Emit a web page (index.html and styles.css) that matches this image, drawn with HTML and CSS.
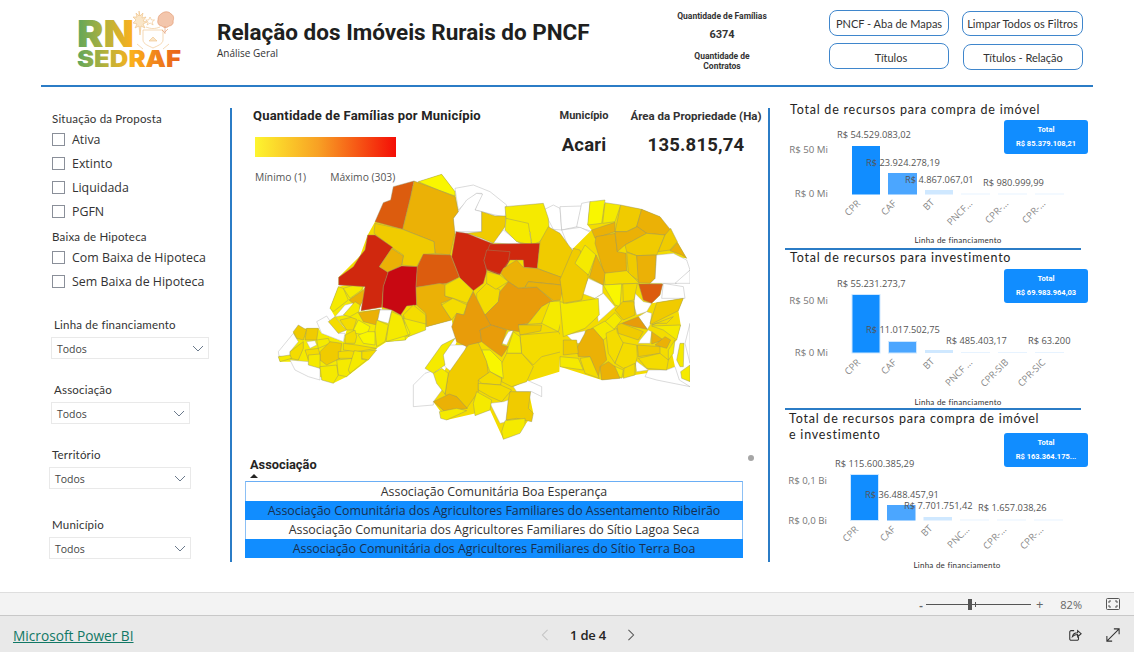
FILE: index.html
```html
<!DOCTYPE html>
<html lang="pt-BR">
<head>
<meta charset="utf-8">
<title>Relação dos Imóveis Rurais do PNCF</title>
<link rel="stylesheet" href="styles.css">
</head>
<body>
<div class="report">
  <header class="head">
    <svg class="logo" viewBox="0 0 110 60" aria-label="RN SEDRAF">
      <defs>
        <linearGradient id="lg1" gradientUnits="userSpaceOnUse" x1="0" y1="0" x2="106" y2="0">
          <stop offset="0" stop-color="#5ea65c"/><stop offset=".28" stop-color="#b9b23a"/><stop offset=".52" stop-color="#fbb01c"/><stop offset=".8" stop-color="#ee7a1c"/><stop offset="1" stop-color="#e8601a"/>
        </linearGradient>
      </defs>
      <text class="logo-rn" x="0" y="36" textLength="57" lengthAdjust="spacingAndGlyphs" fill="url(#lg1)">RN</text>
      <text class="logo-sedraf" x="0" y="56" textLength="104" lengthAdjust="spacingAndGlyphs" fill="url(#lg1)">SEDRAF</text>
      <g class="logo-art-a">
        <path d="M62 0l1 5 3-3-1 5 4-1-3 4 4 1-4 2 2 4-4-2-1 9-1-9-4 2 2-4-4-1 3-3-3-3 4 0-1-4 3 3z"/>
        <path d="M73 6l1.500 3h3l-2.400 2 1 3-3-2-3 2 1-3-2.400-2h3z" class="line"/>
        <path d="M66 19h20v10c0 4-6 6-10 8-4-2-10-4-10-8z" class="line"/>
        <path d="M69 16c5 2 9 2 14 0" class="line"/>
        <path d="M72 30l4-4 4 4z"/>
        <path d="M60 33l6 5M92 33l-6 5" class="line"/>
      </g>
      <g class="logo-art-b">
        <path d="M84 3c3-3 8-3 10 0 3 1 3 5 2 7 1 3-2 5-4 5-2 2-5 2-7 0-3 0-5-3-4-6 0-3 1-5 3-6z"/>
        <path d="M88 15v8M85 19l3 3M91 18l-3 3" class="line"/>
      </g>
    </svg>
    <div class="titles">
      <h1 class="title">Relação dos Imóveis Rurais do PNCF</h1>
      <p class="subtitle">Análise Geral</p>
    </div>
    <div class="kpis">
      <div class="kpi-label kpi-first">Quantidade de Famílias</div>
      <div class="kpi-value">6374</div>
      <div class="kpi-label kpi-last">Quantidade de<br>Contratos</div>
    </div>
    <nav class="buttons">
      <a class="btn btn-a">PNCF - Aba de Mapas</a>
      <a class="btn btn-b">Limpar Todos os Filtros</a>
      <a class="btn btn-c">Títulos</a>
      <a class="btn btn-d">Títulos - Relação</a>
    </nav>
  </header>

  <main class="body">
    <aside class="filters">
      <h4 class="f-label">Situação da Proposta</h4>
      <ul class="checks">
        <li class="check"><span class="box"></span>Ativa</li>
        <li class="check"><span class="box"></span>Extinto</li>
        <li class="check"><span class="box"></span>Liquidada</li>
        <li class="check"><span class="box"></span>PGFN</li>
      </ul>
      <h4 class="f-label f-baixa">Baixa de Hipoteca</h4>
      <ul class="checks checks-tight">
        <li class="check"><span class="box"></span>Com Baixa de Hipoteca</li>
        <li class="check"><span class="box"></span>Sem Baixa de Hipoteca</li>
      </ul>
      <div class="slicer s-linha">
        <h4 class="f-label">Linha de financiamento</h4>
        <div class="select"><span>Todos</span><svg class="chev" viewBox="0 0 12 7"><path d="M1 1l5 5 5-5"/></svg></div>
      </div>
      <div class="slicer s-assoc">
        <h4 class="f-label">Associação</h4>
        <div class="select"><span>Todos</span><svg class="chev" viewBox="0 0 12 7"><path d="M1 1l5 5 5-5"/></svg></div>
      </div>
      <div class="slicer s-terr">
        <h4 class="f-label">Território</h4>
        <div class="select"><span>Todos</span><svg class="chev" viewBox="0 0 12 7"><path d="M1 1l5 5 5-5"/></svg></div>
      </div>
      <div class="slicer s-mun">
        <h4 class="f-label">Município</h4>
        <div class="select"><span>Todos</span><svg class="chev" viewBox="0 0 12 7"><path d="M1 1l5 5 5-5"/></svg></div>
      </div>
    </aside>

    <section class="center">
      <div class="center-top">
        <div class="legend">
          <h2 class="legend-title">Quantidade de Famílias por Município</h2>
          <div class="ramp"></div>
          <div class="legend-scale"><span>Mínimo (1)</span><span>Máximo (303)</span></div>
        </div>
        <div class="card card-mun">
          <div class="card-label">Município</div>
          <div class="card-value">Acari</div>
        </div>
        <div class="card card-area">
          <div class="card-label">Área da Propriedade (Ha)</div>
          <div class="card-value">135.815,74</div>
        </div>
      </div>

      <svg class="map" viewBox="0 0 1290 840">
        <polygon class="u c3" points="345,155 475,35 545,13 585,65 595,125 580,190 700,220 840,215 865,170 935,240 985,320 1000,385 1015,460 950,485 900,560 898,605 800,635 820,730 795,765 730,808 690,720 560,750 520,695 555,600 590,515 575,450 500,470 445,500 380,515 365,412 303,422 315,350 236,345 236,322 300,258 323,195"/>
        <g class="w">
          <polygon points="585,55 640,45 690,65 740,105 735,140 705,135 645,120 665,70 650,70 620,95 595,120"/>
          <polygon points="580,145 620,90 650,70 668,72 645,120 665,125 665,185 580,185"/>
          <polygon points="850,120 880,105 900,115 905,180 880,178 855,130"/>
          <polygon points="900,110 965,108 952,170 905,180"/>
          <polygon points="965,100 990,95 985,165 998,185 950,170"/>
          <polygon points="905,180 960,172 998,190 980,225 945,240 925,230"/>
          <polygon points="695,218 730,180 785,225"/>
          <polygon points="360,418 392,420 385,465 355,450"/>
          <polygon points="725,520 745,485 760,480 740,525"/>
          <polygon points="460,645 495,610 525,600 550,655 520,695 520,705 460,710"/>
          <polygon points="545,560 565,525 620,525 605,575 580,610 555,590"/>
          <polygon points="690,700 730,695 745,690 740,755 720,760"/>
          <polygon points="760,650 800,630 845,650 845,680 815,665 770,665"/>
          <polygon points="925,510 950,485 978,480 975,520 950,520"/>
        </g>
        <g transform="translate(45 330)">
          <polygon class="u c2" points="190,20 270,5 250,95 315,88 345,130 425,105 430,140 392,180 335,185 305,205 280,240 215,290 175,310 135,290 135,220 100,245 15,245 10,230 45,215 55,155 95,145 130,145 140,160 205,185 215,150 180,110 165,85"/>
          <g class="w">
            <polygon points="180,110 210,75 250,65 240,90 215,105"/>
            <polygon points="125,125 155,108 190,160 210,160 205,185 140,160"/>
            <polygon points="10,215 55,160 70,185 45,215 45,235 12,228"/>
            <polygon points="95,185 120,182 125,195 105,205"/>
            <polygon points="45,240 100,245 135,265 135,300 100,290 60,270"/>
            <polygon points="305,120 310,90 350,90 340,130"/>
          </g>
          <polygon class="c2" points="190,20 205,25 220,60 175,95 165,85"/>
          <polygon class="c2" points="205,25 270,5 260,30 225,55"/>
          <polygon class="c5" points="222,60 265,30 272,20 270,50 250,90 240,75"/>
          <polygon class="c2" points="205,105 240,65 255,75 252,95 225,110"/>
          <polygon class="c5" points="250,98 315,88 305,135 265,125"/>
          <polygon class="c3" points="160,125 180,110 205,140 215,150 190,160"/>
          <polygon class="c3" points="195,120 228,112 245,118 235,150 215,150"/>
          <polygon class="c1" points="235,150 250,120 285,140 275,165 240,160"/>
          <polygon class="c3" points="240,150 210,165 210,190 240,190 245,170"/>
          <polygon class="c1" points="250,165 278,155 300,155 300,195 265,190"/>
          <polygon class="c2" points="300,150 305,120 340,135 330,185 305,200"/>
          <polygon class="c1" points="345,130 380,105 385,145 392,180 335,185"/>
          <polygon class="c1" points="385,110 425,105 430,140 395,170"/>
          <polygon class="c4" points="55,155 70,135 95,150 85,180 65,175"/>
          <polygon class="c4" points="95,145 130,145 125,180 90,180"/>
          <polygon class="c3" points="45,215 85,185 85,205 70,240 45,235"/>
          <polygon class="c3" points="90,210 130,205 135,225 100,240"/>
          <polygon class="c2" points="10,230 45,225 50,235 15,245"/>
          <polygon class="c2" points="125,180 160,175 165,190 130,205"/>
          <polygon class="c4" points="135,215 165,185 200,190 195,235 155,255 135,240"/>
          <polygon class="c2" points="100,225 135,222 135,265 100,255"/>
          <polygon class="c2" points="135,260 185,255 190,285 175,310 140,300"/>
          <polygon class="c2" points="185,240 235,235 250,255 215,290 190,285"/>
          <polygon class="c3" points="190,215 240,210 235,235 190,235"/>
          <polygon class="c3" points="260,215 305,210 280,240 260,235"/>
          <polygon class="c3" points="205,190 245,195 305,205 245,215 205,210"/>
          <polygon class="c2" points="238,212 260,215 260,238 275,240 225,280 220,270"/>
        </g>

        <polygon class="c1" points="475,35 545,13 585,65 585,78 535,60"/>
        <polygon class="c7" points="400,50 462,33 452,80 428,178 345,155 370,98 392,90"/>
        <polygon class="c5" points="462,33 535,60 585,80 595,125 580,145 585,190 570,255 525,250 522,215 428,178 452,80"/>
        <polygon class="c4" points="665,125 705,138 738,138 735,170 700,220 665,205 620,190 665,185"/>
        <polygon class="c2" points="735,110 850,100 865,145 868,180 840,215 815,225 810,185 738,145"/>
        <polygon class="c2" points="738,145 805,160 815,225 770,215 735,180"/>
        <polygon class="c4" points="345,160 428,178 522,215 525,250 490,255 470,290 425,285 430,255 395,232 342,190"/>
        <polygon class="c8" points="323,195 345,195 398,232 358,290 385,305 370,350 365,412 303,422 315,350 236,345 236,322 280,290 300,258 315,240"/>
        <polygon class="c5" points="395,235 430,258 425,285 385,308 358,290"/>
        <polygon class="c9" points="385,305 425,288 472,290 468,350 470,405 440,408 422,435 395,420 367,412 370,350"/>
        <polygon class="c7" points="490,252 572,255 598,322 560,340 468,352 472,290"/>
        <polygon class="c8" points="588,185 620,190 700,222 675,262 680,305 670,340 640,362 600,325 575,260"/>
        <polygon class="c8" points="690,222 840,220 832,295 792,292 790,270 750,270 735,295 718,315 680,300 672,270"/>
        <polygon class="c8" points="680,240 750,245 745,275 720,312 680,298 672,272"/>
        <polygon class="c4" points="865,170 900,190 940,245 910,325 832,295 840,215"/>
        <polygon class="c5" points="468,352 540,340 558,345 555,378 580,385 543,400 575,450 500,470 497,430 470,405"/>
        <polygon class="c3" points="555,345 598,322 640,362 622,400 580,385 555,378"/>
        <polygon class="c3" points="545,405 578,385 622,405 610,435 590,430 575,450"/>
        <polygon class="c3" points="650,370 680,340 720,360 715,395 675,435 650,405"/>
        <polygon class="c3" points="680,305 720,315 745,335 708,358 680,340"/>
        <polygon class="c5" points="722,310 730,295 770,270 790,292 832,296 905,322 905,345 805,335 795,352 775,355 745,335"/>
        <polygon class="c5" points="805,335 905,345 905,390 880,392 830,352 795,352"/>
        <polygon class="c6" points="720,365 745,335 775,355 830,352 880,395 845,410 805,460 780,485 745,480 690,465 675,435 715,395"/>
        <polygon class="c6" points="640,365 675,435 692,465 660,480 665,515 620,530 590,515 575,470 590,430 612,435 622,400"/>
        <polygon class="c6" points="660,480 695,465 740,480 725,525 745,530 725,560 690,535 665,515"/>
        <polygon class="c3" points="805,460 845,410 870,395 860,440 845,460 775,465"/>
        <polygon class="c2" points="845,460 870,395 920,392 895,485"/>
        <polygon class="c4" points="775,465 845,465 842,483 780,495"/>
        <polygon class="c3" points="780,495 842,490 895,485 912,510 905,545 845,560 820,585 785,550"/>
        <polygon class="c2" points="745,530 760,485 780,500 785,550 740,550"/>
        <polygon class="c3" points="725,580 740,550 785,550 820,590 800,635 755,650 725,635"/>
        <polygon class="c1" points="665,540 690,540 725,575 730,625 690,605"/>
        <polygon class="c4" points="625,525 655,518 680,575 685,610 655,630 655,665 620,715 590,680 555,675 565,610"/>
        <polygon class="c3" points="655,630 690,605 725,625 722,645 665,640"/>
        <polygon class="c3" points="655,640 722,645 755,660 725,695 690,680 655,660"/>
        <polygon class="c2" points="650,665 695,690 690,720 645,737 640,700"/>
        <polygon class="c5" points="520,695 568,672 590,680 622,715 590,720 555,725"/>
        <polygon class="c2" points="538,725 590,715 620,722 560,750 542,745"/>
        <polygon class="c2" points="495,595 545,525 585,505 550,555 555,585 520,610"/>
        <polygon class="c2" points="520,610 545,595 565,610 555,672 530,640"/>
        <polygon class="c4" points="750,665 812,665 805,715 820,730 815,755 770,745 738,750 745,690"/>
        <polygon class="c2" points="735,752 795,745 795,765 780,790 730,808 725,785"/>
        <polygon class="c2" points="395,425 425,438 445,495 395,510 378,515 385,470"/>
        <polygon class="c3" points="430,435 460,405 497,435 497,462 450,485"/>
        <polygon class="c2" points="430,445 450,490 445,500 497,480 497,462"/>

        <g transform="translate(900 60)">
          <polygon class="u c3" points="90,35 245,58 300,80 352,155 380,205 290,195 285,265 308,282 300,315 275,340 370,325 355,362 362,405 350,450 332,470 345,530 320,540 225,555 180,565 125,570 0,530 0,335 40,175 95,120 83,105"/>
          <g class="w">
            <polygon points="310,280 370,290 375,325 305,325"/>
            <polygon points="290,195 340,190 380,210 390,240 350,280 300,280 270,280 285,265"/>
            <polygon points="345,280 390,240 390,280"/>
            <polygon points="65,310 85,265 128,285 128,310 105,325"/>
            <polygon points="105,325 130,310 165,350 115,395"/>
            <polygon points="225,310 250,335 275,340 260,365 230,375 222,345"/>
            <polygon points="235,380 260,365 275,370 270,405 262,418"/>
            <polygon points="240,450 265,420 275,425 270,460 235,460"/>
            <polygon points="225,510 265,540 230,545"/>
            <polygon points="265,540 320,540 345,530 358,570 390,590 290,570 255,560"/>
            <polygon points="375,460 390,400 390,520"/>
            <polygon points="20,435 75,422 75,460 45,460"/>
          </g>
          <polygon class="c1" points="90,35 135,30 125,100 83,105"/>
          <polygon class="c2" points="135,38 182,45 165,95 128,100"/>
          <polygon class="c4" points="182,45 245,58 230,110 200,125 165,125"/>
          <polygon class="c5" points="245,58 300,80 332,120 315,135 260,130 230,110"/>
          <polygon class="c5" points="95,120 165,97 165,125 105,145"/>
          <polygon class="c5" points="108,140 165,130 172,185 198,190 200,250 132,250 105,160"/>
          <polygon class="c5" points="165,125 200,125 232,110 260,130 195,165 172,185"/>
          <polygon class="c4" points="195,165 260,130 315,135 290,195 230,197 200,185"/>
          <polygon class="c4" points="332,115 352,155 330,180 295,185 315,135"/>
          <polygon class="c5" points="352,158 380,205 365,195 330,182"/>
          <polygon class="c4" points="200,187 230,197 240,275 205,250"/>
          <polygon class="c5" points="230,197 288,195 285,265 270,280 235,278"/>
          <polygon class="c3" points="132,250 200,242 238,280 180,282 135,285"/>
          <polygon class="c1" points="130,285 185,282 180,350 165,345"/>
          <polygon class="c3" points="188,282 232,280 222,330 190,335"/>
          <polygon class="c7" points="236,282 308,282 300,315 275,340 250,330"/>
          <polygon class="c4" points="188,335 222,335 225,375 190,390 165,360"/>
          <polygon class="c6" points="185,400 235,380 262,418 222,410"/>
          <polygon class="c4" points="170,405 185,400 250,425 235,450 175,430"/>
          <polygon class="c4" points="270,400 290,338 370,325 355,362 275,402"/>
          <polygon class="c3" points="275,405 340,380 320,400 290,400"/>
          <polygon class="c2" points="275,408 362,405 350,450 310,420"/>
          <polygon class="c5" points="275,425 310,450 275,462"/>
          <polygon class="c5" points="285,465 315,440 332,450 320,475"/>
          <polygon class="c4" points="232,465 300,470 300,490 235,500"/>
          <polygon class="c3" points="235,505 300,490 325,510 320,540 260,535"/>
          <polygon class="c2" points="325,480 345,450 340,490 325,510"/>
          <polygon class="c2" points="350,510 360,460 372,460 370,530 360,530"/>
          <polygon class="c2" points="362,545 390,525 390,575 365,565"/>
          <polygon class="c2" points="0,335 20,340 115,325 118,375 75,415 10,440"/>
          <polygon class="c4" points="40,175 60,180 85,260 65,330 10,340 0,268"/>
          <polygon class="c2" points="75,165 108,195 85,255 45,220"/>
          <polygon class="c5" points="108,195 135,250 130,285 88,262"/>
          <polygon class="c2" points="135,395 165,368 185,390 160,420"/>
          <polygon class="c2" points="95,415 135,393 165,420 130,450"/>
          <polygon class="c3" points="138,430 170,415 172,428 190,460 165,520 145,490"/>
          <polygon class="c3" points="165,520 190,458 230,465 232,500 225,530 190,535"/>
          <polygon class="c2" points="162,528 190,540 185,565 165,555"/>
          <polygon class="c3" points="192,535 225,520 225,555 190,565"/>
          <polygon class="c5" points="120,530 145,515 165,530 180,565 125,570"/>
          <polygon class="c5" points="50,475 80,420 100,415 130,450 140,510 120,530 115,565 90,500 55,500"/>
          <polygon class="c3" points="60,505 90,500 118,565 75,550"/>
          <polygon class="c2" points="0,500 55,505 70,540 0,530"/>
          <polygon class="c4" points="10,450 50,450 55,490 10,495"/>
        </g>
      </svg>

      <div class="assoc">
        <h3 class="assoc-head">Associação</h3>
        <span class="sort"></span>
        <span class="scroll-dot"></span>
        <ul class="rows">
          <li class="row">Associação Comunitária Boa Esperança</li>
          <li class="row row-on">Associação Comunitária dos Agricultores Familiares do Assentamento Ribeirão</li>
          <li class="row">Associação Comunitaria dos Agricultores Familiares do Sítio Lagoa Seca</li>
          <li class="row row-on">Associação Comunitária dos Agricultores Familiares do Sítio Terra Boa</li>
        </ul>
      </div>
    </section>

    <section class="charts">
      <article class="panel panel-1">
        <h3 class="panel-title">Total de recursos para compra de imóvel</h3>
        <div class="total"><span>Total</span><span>R$ 85.379.108,21</span></div>
        <svg class="chart" viewBox="785 120 310 128" height="128">
          <text class="ax end" x="828" y="153">R$ 50 Mi</text>
          <text class="ax end" x="828" y="197">R$ 0 Mi</text>
          <rect class="b1" x="852" y="146" width="28" height="48.500"/>
          <rect class="b2" x="888" y="173" width="29" height="21.500"/>
          <rect class="b3" x="925" y="190" width="28" height="4.500"/>
          <rect class="b4" x="961" y="193.500" width="29" height="1"/>
          <rect class="b4" x="998" y="193.500" width="29" height="1"/>
          <rect class="b4" x="1035" y="193.500" width="29" height="1"/>
          <text class="dl" x="837" y="138">R$ 54.529.083,02</text>
          <text class="dl" x="866" y="166">R$ 23.924.278,19</text>
          <text class="dl" x="905" y="183">R$ 4.867.067,01</text>
          <text class="dl" x="983" y="186">R$ 980.999,99</text>
          <text class="xl" transform="translate(861 204) rotate(-45)">CPR</text>
          <text class="xl" transform="translate(897 204) rotate(-45)">CAF</text>
          <text class="xl" transform="translate(935 203) rotate(-45)">BT</text>
          <text class="xl" transform="translate(973 204) rotate(-45)">PNCF...</text>
          <text class="xl" transform="translate(1009 204) rotate(-45)">CPR-...</text>
          <text class="xl" transform="translate(1046 204) rotate(-45)">CPR-...</text>
          <text class="at" x="958" y="243">Linha de financiamento</text>
        </svg>
      </article>
      <article class="panel panel-2">
        <h3 class="panel-title">Total de recursos para investimento</h3>
        <div class="total"><span>Total</span><span>R$ 69.983.964,03</span></div>
        <svg class="chart" viewBox="785 267 310 141" height="141">
          <text class="ax end" x="828" y="304">R$ 50 Mi</text>
          <text class="ax end" x="828" y="356">R$ 0 Mi</text>
          <rect class="b1 o" x="852" y="294.500" width="28" height="58.500"/>
          <rect class="b2 o" x="888.500" y="341.500" width="28" height="11.500"/>
          <rect class="b3" x="925" y="350" width="28" height="3"/>
          <rect class="b4" x="961" y="352" width="29" height="1"/>
          <rect class="b4" x="998" y="352" width="29" height="1"/>
          <rect class="b4" x="1035" y="352" width="29" height="1"/>
          <text class="dl" x="837" y="287">R$ 55.231.273,7</text>
          <text class="dl" x="866" y="333">R$ 11.017.502,75</text>
          <text class="dl" x="946" y="344">R$ 485.403,17</text>
          <text class="dl" x="1028" y="344">R$ 63.200</text>
          <text class="xl" transform="translate(861 363) rotate(-45)">CPR</text>
          <text class="xl" transform="translate(897 363) rotate(-45)">CAF</text>
          <text class="xl" transform="translate(935 362) rotate(-45)">BT</text>
          <text class="xl" transform="translate(973 363) rotate(-45)">PNCF ...</text>
          <text class="xl" transform="translate(1009 363) rotate(-45)">CPR-SIB</text>
          <text class="xl" transform="translate(1046 363) rotate(-45)">CPR-SIC</text>
          <text class="at" x="958" y="405">Linha de financiamento</text>
        </svg>
      </article>
      <article class="panel panel-3">
        <h3 class="panel-title">Total de recursos para compra de imóvel<br>e investimento</h3>
        <div class="total"><span>Total</span><span>R$ 163.364.175...</span></div>
        <svg class="chart" viewBox="785 444 310 128" height="128">
          <text class="ax end" x="827" y="484">R$ 0,1 Bi</text>
          <text class="ax end" x="827" y="524">R$ 0,0 Bi</text>
          <rect class="b1 o" x="850.500" y="474.500" width="28" height="46"/>
          <rect class="b2" x="887" y="505" width="28.500" height="15.500"/>
          <rect class="b3" x="923.500" y="517" width="28.500" height="3.500"/>
          <rect class="b4" x="960" y="519.500" width="29" height="1"/>
          <rect class="b4" x="997" y="519.500" width="29" height="1"/>
          <rect class="b4" x="1034" y="519.500" width="29" height="1"/>
          <text class="dl" x="835" y="467">R$ 115.600.385,29</text>
          <text class="dl" x="865" y="498">R$ 36.488.457,91</text>
          <text class="dl" x="904" y="509">R$ 7.701.751,42</text>
          <text class="dl" x="978" y="511">R$ 1.657.038,26</text>
          <text class="xl" transform="translate(859 530) rotate(-45)">CPR</text>
          <text class="xl" transform="translate(896 530) rotate(-45)">CAF</text>
          <text class="xl" transform="translate(933 529) rotate(-45)">BT</text>
          <text class="xl" transform="translate(970 530) rotate(-45)">PNC...</text>
          <text class="xl" transform="translate(1007 530) rotate(-45)">CPR-...</text>
          <text class="xl" transform="translate(1044 530) rotate(-45)">CPR-...</text>
          <text class="at" x="957" y="568">Linha de financiamento</text>
        </svg>
      </article>
    </section>
  </main>
</div>

<div class="zoombar">
  <span class="z-minus">-</span>
  <span class="z-track"><span class="z-thumb"></span><span class="z-tick"></span></span>
  <span class="z-plus">+</span>
  <span class="z-pct">82%</span>
  <svg class="z-fit" viewBox="0 0 14 12"><rect x=".5" y=".5" width="13" height="11" rx="1"/><path d="M3 5V3h2M11 5V3H9M3 7v2h2M11 7v2H9"/></svg>
</div>

<footer class="foot">
  <a class="pbi">Microsoft Power BI</a>
  <div class="pager">
    <svg class="pg pg-off" viewBox="0 0 8 14"><path d="M7 1L1 7l6 6"/></svg>
    <span class="pg-text">1 de 4</span>
    <svg class="pg" viewBox="0 0 8 14"><path d="M1 1l6 6-6 6"/></svg>
  </div>
  <div class="foot-icons">
    <svg class="fi" viewBox="0 0 16 16"><path d="M7 3H3.500A1.500 1.500 0 0 0 2 4.500v8A1.500 1.500 0 0 0 3.500 14h7a1.500 1.500 0 0 0 1.500-1.500V10"/><path d="M5 10c.5-3 3-4.500 6-4.500V3l4 3.500-4 3.500V7.500c-2.500 0-4.500 1-6 2.500z"/></svg>
    <svg class="fi" viewBox="0 0 16 16"><path d="M1 15L15 1M9 1h6v6M1 9v6h6"/></svg>
  </div>
</footer>
</body>
</html>
```
FILE: styles.css
```css
* { box-sizing: border-box; }
html, body { margin: 0; padding: 0; }
body {
  width: 1134px;
  height: 652px;
  overflow: hidden;
  display: flex;
  flex-direction: column;
  background: #fff;
  font-family: "Open Sans", "Noto Sans", sans-serif;
  color: #252423;
}
h1, h2, h3, h4, p, ul { margin: 0; padding: 0; }
ul { list-style: none; }

.report { height: 592px; flex: none; }

/* header */
.head {
  height: 87px;
  margin: 0 41px;
  border-bottom: 2px solid #2b7cc6;
  display: flex;
}
.logo { width: 110px; height: 60px; margin: 11px 0 0 36px; flex: none; overflow: visible; }
.logo-rn { font: 900 37px Inter, sans-serif; }
.logo-sedraf { font: 900 23px Inter, sans-serif; }
.logo-art-a { fill: #fae6c8; stroke: #efc083; stroke-width: .6; }
.logo-art-b { fill: #f3c6ac; stroke: #e09468; stroke-width: .6; }
.line { fill: none; }
.titles { margin: 19px 0 0 30px; width: 395px; flex: none; }
.title {
  font: 700 22.500px/26px Roboto, sans-serif;
  color: #201f1e;
  white-space: nowrap;
}
.subtitle { font-size: 10px; line-height: 14px; color: #333; margin-top: 1px; }
.kpis { width: 100px; margin: 11px 0 0 60px; text-align: center; flex: none; font-family: Roboto, sans-serif; }
.kpi-label { font-size: 8.500px; font-weight: 700; line-height: 10px; color: #333; white-space: nowrap; }
.kpi-value { font-size: 11px; font-weight: 700; line-height: 14px; margin: 7px 0 0; color: #333; }
.kpi-last { margin-top: 9px; }

.buttons {
  margin: 10px 0 0 57px;
  display: grid;
  grid-template-columns: 120px 121px;
  grid-template-rows: 26px 26px;
  column-gap: 13px;
  row-gap: 7px;
}
.btn {
  border: 1px solid #3f86cc;
  border-radius: 8px;
  display: flex;
  align-items: center;
  justify-content: center;
  font: 11px Lato, sans-serif;
  color: #333;
  white-space: nowrap;
}
.btn-b { margin-top: 1px; }
.btn-c { padding-top: 2px; padding-left: 4px; }
.btn-d { margin-top: 1px; margin-left: 1px; margin-bottom: -1px; padding-top: 1px; }

/* main */
.body { display: flex; padding-left: 41px; align-items: flex-start; }

.filters { width: 189px; padding: 25px 0 0 11px; flex: none; }
.f-label {
  font: 400 11.500px/14px Lato, sans-serif;
  letter-spacing: .2px;
  color: #333;
  white-space: nowrap;
}
.checks { margin-top: 1px; }
.check {
  height: 24px;
  display: flex;
  align-items: center;
  font-size: 12.400px;
  color: #333;
  white-space: nowrap;
}
.box {
  width: 13px;
  height: 13px;
  border: 1px solid #8a8f99;
  margin-right: 7px;
  flex: none;
}
.f-baixa { margin-top: 7px; }
.checks-tight { margin-top: 1px; }

.slicer .f-label { margin-left: 3px; }
.select {
  margin-top: 5px;
  height: 22px;
  border: 1px solid #e9e9e9;
  display: flex;
  align-items: center;
  justify-content: space-between;
  padding: 1px 4px 0 5px;
  font-size: 10.500px;
  color: #444;
}
.chev { width: 12px; height: 7px; fill: none; stroke: #6b7a8c; stroke-width: 1; }
.s-linha { margin: 25px 0 0 -1px; width: 158px; }
.s-assoc { margin: 24px 0 0 -1px; width: 139px; }
.s-terr  { margin: 24px 0 0 -3px; width: 142px; }
.s-mun   { margin: 29px 0 0 -3px; width: 142px; }

.center {
  width: 540px;
  height: 454px;
  margin-top: 21px;
  border-left: 2px solid #2b7cc6;
  border-right: 2px solid #2b7cc6;
  flex: none;
}
.center-top { height: 62px; display: flex; }
.legend { width: 294px; padding: 1px 0 0 21px; flex: none; }
.legend-title {
  font: 700 13px/14px Roboto, sans-serif;
  letter-spacing: .2px;
  color: #252423;
  white-space: nowrap;
}
.ramp {
  width: 141px;
  height: 20px;
  margin: 14px 0 0 2px;
  background: linear-gradient(to right, #fdf52f, #f8a024 45%, #f40e06);
}
.legend-scale {
  display: flex;
  gap: 24px;
  margin: 13px 0 0 2px;
  font-size: 10.300px;
  line-height: 14px;
  color: #555;
  white-space: nowrap;
}
.card { text-align: center; flex: none; padding-top: 1px; }
.card-mun { width: 62px; margin-left: 27px; }
.card-area { width: 136px; margin-left: 13px; }
.card-label {
  font: 700 11px/14px Roboto, sans-serif;
  color: #333;
  white-space: nowrap;
}
.card-area .card-label { font-size: 11.500px; }
.card-value {
  font: 700 18.500px/28px Roboto, sans-serif;
  letter-spacing: .2px;
  color: #252423;
  margin-top: 8px;
  white-space: nowrap;
}
.map { display: block; width: 430px; height: 280px; margin-left: 28px; }
.map polygon { stroke: #93916c; stroke-width: 1.300; stroke-linejoin: round; }
.map .w polygon { fill: #fff; stroke: #aaa; }
.map .u { stroke: none; }
.c1 { fill: #f9f600; }
.c2 { fill: #f5ea00; }
.c3 { fill: #f4dc00; }
.c4 { fill: #f0cb00; }
.c5 { fill: #ebb106; }
.c6 { fill: #e89c0a; }
.c7 { fill: #dc5c0e; }
.c8 { fill: #d0280e; }
.c9 { fill: #c80812; }

.assoc { position: relative; margin-left: 13px; width: 498px; padding-top: 8px; }
.assoc-head {
  font: 700 12.800px/14px Roboto, sans-serif;
  margin-left: 5px;
  color: #252423;
}
.sort {
  display: block;
  width: 0;
  height: 0;
  margin: 2px 0 0 5px;
  border-left: 4px solid transparent;
  border-right: 4px solid transparent;
  border-bottom: 4px solid #252423;
}
.scroll-dot {
  position: absolute;
  right: -11px;
  top: 5px;
  width: 6px;
  height: 6px;
  border-radius: 50%;
  background: #a6a6a6;
}
.rows {
  margin-top: 3px;
  border-top: 1px solid #6aaef5;
  border-left: 1px solid #8cc0f5;
  border-right: 1px solid #8cc0f5;
}
.row {
  height: 19px;
  line-height: 20px;
  text-align: center;
  font-size: 12.400px;
  color: #333;
  white-space: nowrap;
}
.row-on { background: #118dff; color: #17304f; margin: 0 -1px; }

/* charts */
.charts { margin-left: 15px; width: 296px; flex: none; }
.panel { position: relative; }
.panel-title {
  font: 400 12.500px/16px Lato, sans-serif;
  letter-spacing: .78px;
  color: #252423;
}
.panel-1 { height: 148px; margin-top: 13px; }
.panel-1 .panel-title { padding: 2px 0 2px 5px; height: 20px; }
.panel-2 { height: 160px; border-top: 2px solid #2b7cc6; }
.panel-2 .panel-title { padding: 0 0 1px 5px; height: 17px; }
.panel-3 { border-top: 2px solid #2b7cc6; }
.panel-3 .panel-title { padding: 1px 0 0 4px; height: 34px; }
.chart { display: block; width: 310px; overflow: visible; }
.total {
  position: absolute;
  left: 219px;
  width: 84px;
  height: 34px;
  background: #118dff;
  border-radius: 3px;
  color: #fff;
  font: 700 7.500px/14.500px Roboto, sans-serif;
  display: flex;
  flex-direction: column;
  align-items: center;
  justify-content: center;
  white-space: nowrap;
}
.panel-1 .total { top: 20px; }
.panel-2 .total { top: 19px; }
.panel-3 .total { top: 23px; }
.ax, .dl, .xl { font: 9.700px "Open Sans", sans-serif; }
.ax { fill: #777; }
.dl { fill: #555; font-size: 9.300px; }
.end { text-anchor: end; }
.xl { text-anchor: end; font-size: 9.500px; fill: #888; }
.at { font: 8px Lato, sans-serif; fill: #333; text-anchor: middle; letter-spacing: .25px; }
.b1 { fill: #118dff; }
.b2 { fill: #4ba6ff; }
.b3 { fill: #cfe8ff; }
.b4 { fill: #e7f3ff; }
.o { stroke: #cfe8ff; stroke-width: 1; }

/* zoom bar */
.zoombar {
  height: 24px;
  flex: none;
  background: #f3f3f3;
  border-top: 1px solid #dedede;
  border-bottom: 1px solid #c8c8c8;
  display: flex;
  align-items: center;
  justify-content: flex-end;
  padding-right: 14px;
  font-size: 11px;
  color: #666;
}
.z-minus { font-weight: 700; margin-right: 3px; }
.z-track { width: 105px; height: 1px; background: #555; position: relative; margin-right: 5px; }
.z-thumb { position: absolute; left: 42px; top: -5px; width: 4px; height: 11px; background: #555; }
.z-tick { position: absolute; left: 49px; top: -2px; width: 1px; height: 5px; background: #555; }
.z-plus { font-size: 13px; margin-right: 17px; }
.z-pct { margin-right: 24px; font-size: 11px; }
.z-fit { width: 14px; height: 12px; fill: none; stroke: #555; stroke-width: 1; }

/* footer */
.foot {
  flex: 1;
  background: #e9e9e9;
  display: flex;
  align-items: center;
  padding: 2px 13px 0;
}
.pbi {
  font-size: 13.700px;
  color: #117865;
  text-decoration: underline;
  width: 120px;
  white-space: nowrap;
  flex: none;
}
.pager { display: flex; align-items: center; margin-left: 408px; }
.pg { width: 8px; height: 12px; fill: none; stroke: #555; stroke-width: 1.200; }
.pg-off { stroke: #c4c4c4; }
.pg-text { font-size: 13px; font-weight: 600; color: #252423; margin: 0 21px; letter-spacing: -.2px; }
.foot-icons { margin-left: auto; display: flex; gap: 24px; padding-right: 1px; }
.fi { width: 14px; height: 14px; fill: none; stroke: #333; stroke-width: 1.200; }
```
